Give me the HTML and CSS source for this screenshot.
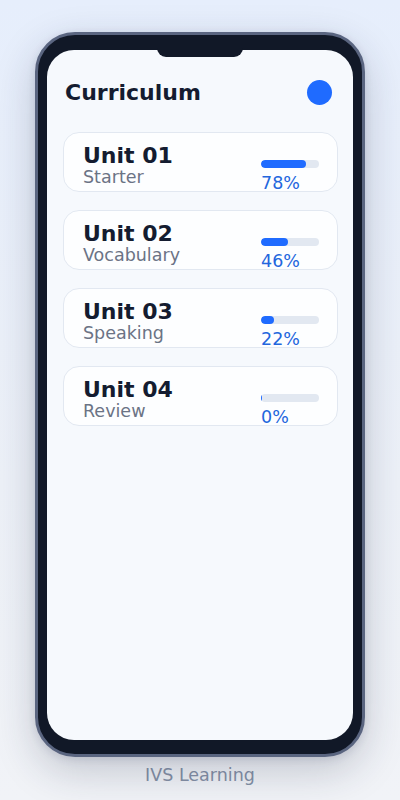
FILE: index.html
```html
<!DOCTYPE html>
<html lang="en">
<head>
<meta charset="utf-8">
<title>Curriculum</title>
<link rel="stylesheet" href="styles.css">
</head>
<body>
  <div class="stage">
    <div class="phone">
      <div class="notch"></div>
      <div class="screen">
        <header class="top">
          <h1 class="title">Curriculum</h1>
          <span class="avatar"></span>
        </header>
        <ul class="units">
          <li class="unit">
            <div class="unit-text">
              <div class="unit-name">Unit 01</div>
              <div class="unit-sub">Starter</div>
            </div>
            <div class="unit-progress">
              <div class="track"><div class="fill" style="width:78%"></div></div>
              <div class="pct">78%</div>
            </div>
          </li>
          <li class="unit">
            <div class="unit-text">
              <div class="unit-name">Unit 02</div>
              <div class="unit-sub">Vocabulary</div>
            </div>
            <div class="unit-progress">
              <div class="track"><div class="fill" style="width:46%"></div></div>
              <div class="pct">46%</div>
            </div>
          </li>
          <li class="unit">
            <div class="unit-text">
              <div class="unit-name">Unit 03</div>
              <div class="unit-sub">Speaking</div>
            </div>
            <div class="unit-progress">
              <div class="track"><div class="fill" style="width:22%"></div></div>
              <div class="pct">22%</div>
            </div>
          </li>
          <li class="unit">
            <div class="unit-text">
              <div class="unit-name">Unit 04</div>
              <div class="unit-sub">Review</div>
            </div>
            <div class="unit-progress">
              <div class="track"><div class="fill" style="width:0%"></div></div>
              <div class="pct">0%</div>
            </div>
          </li>
        </ul>
      </div>
    </div>
    <div class="brand">IVS Learning</div>
  </div>
</body>
</html>
```

FILE: styles.css
```css
* {
  box-sizing: border-box;
}

html, body {
  margin: 0;
  padding: 0;
}

body {
  width: 400px;
  height: 800px;
  overflow: hidden;
  background: linear-gradient(180deg, #e6eefc 0%, #edf1f8 60%, #f1f3f7 100%);
  font-family: "DejaVu Sans", "Liberation Sans", sans-serif;
}

.stage {
  display: flex;
  flex-direction: column;
  align-items: center;
  padding-top: 32px;
}

/* device frame */
.phone {
  position: relative;
  width: 330px;
  height: 725px;
  padding: 15px 9px 14px;
  background: #111827;
  border: 3px solid #5a6580;
  border-radius: 40px;
  box-shadow: 0 14px 40px rgba(30, 41, 70, 0.22), 0 2px 8px rgba(30, 41, 70, 0.12);
}

.notch {
  position: absolute;
  top: 0;
  left: 50%;
  width: 86px;
  height: 22px;
  margin-left: -43px;
  background: #111827;
  border-radius: 0 0 9px 9px;
  z-index: 2;
}

.screen {
  height: 100%;
  background: #f6f9fd;
  border-radius: 27px;
  padding: 30px 15px 0 16px;
  overflow: hidden;
}

.top {
  display: flex;
  align-items: center;
  justify-content: space-between;
  height: 24px;
  padding: 0 6px 0 2px;
}

.title {
  margin: 0;
  font-size: 22px;
  line-height: 24px;
  font-weight: 700;
  color: #141c30;
  position: relative;
  top: 1px;
}

.avatar {
  width: 25px;
  height: 25px;
  border-radius: 50%;
  background: #1f6bff;
}

.units {
  list-style: none;
  margin: 28px 0 0;
  padding: 0;
  display: flex;
  flex-direction: column;
  gap: 18px;
}

.unit {
  display: flex;
  justify-content: space-between;
  align-items: flex-start;
  height: 60px;
  padding: 11px 18px 0 19px;
  background: #fdfeff;
  border: 1px solid #e2e8f1;
  border-radius: 16px;
}

.unit-text {
  display: flex;
  flex-direction: column;
}

.unit-name {
  font-size: 22px;
  line-height: 24px;
  font-weight: 700;
  color: #141c30;
}

.unit-sub {
  font-size: 17.5px;
  line-height: 20px;
  color: #6b7385;
  position: relative;
  top: -1px;
}

.unit-progress {
  width: 58px;
  padding-top: 16px;
  display: flex;
  flex-direction: column;
}

.track {
  height: 8px;
  background: #e2e8f1;
  border-radius: 4px;
  overflow: hidden;
}

.fill {
  height: 100%;
  min-width: 1px;
  background: #1f6bff;
  border-radius: 4px;
}

.pct {
  margin-top: 5px;
  font-size: 17.5px;
  line-height: 20px;
  color: #2366dd;
}

.brand {
  margin-top: 8px;
  font-size: 17.5px;
  line-height: 20px;
  color: #8490a6;
}
```
